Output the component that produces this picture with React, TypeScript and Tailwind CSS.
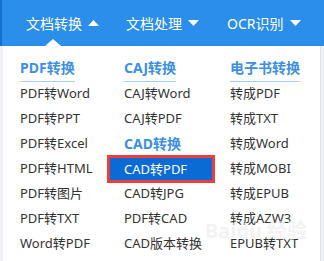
const font = { fontFamily: "'Noto Sans', 'Noto Sans CJK SC', sans-serif" };

const Caret = ({ up }: { up?: boolean }) => (
  <svg width="11" height="6" viewBox="0 0 11 6" className="shrink-0">
    {up ? <polygon points="0,6 5.5,0 11,6" fill="#fff" /> : <polygon points="0,0 11,0 5.5,6" fill="#fff" />}
  </svg>
);

const columns = [
  {
    title: "PDF转换",
    items: ["PDF转Word", "PDF转PPT", "PDF转Excel", "PDF转HTML", "PDF转图片", "PDF转TXT", "Word转PDF"],
  },
  {
    title: "CAJ转换",
    items: ["CAJ转Word", "CAJ转PDF", "#CAD转换", "!CAD转PDF", "CAD转JPG", "PDF转CAD", "CAD版本转换"],
  },
  {
    title: "电子书转换",
    items: ["转成PDF", "转成TXT", "转成Word", "转成MOBI", "转成EPUB", "转成AZW3", "EPUB转TXT"],
  },
];

const widths = ["w-[104px] pl-[17px]", "w-[108px] pl-[17px]", "flex-1 pl-[15px]"];

export default function App() {
  return (
    <div className="w-[324px] h-[261px] bg-[#eef1f5] overflow-hidden relative" style={font}>
      {/* top bar */}
      <div className="h-[46px] bg-[#2b8eea] border-l-[2px] border-[#1670d4] flex items-center pl-[24px] relative">
        <div className="w-[100px] flex items-center gap-[6px] text-white text-[14px]">
          <span>文档转换</span>
          <Caret up />
        </div>
        <div className="w-[101px] flex items-center gap-[6px] text-white text-[14px]">
          <span>文档处理</span>
          <Caret />
        </div>
        <div className="flex items-center gap-[6px] text-white text-[14px]">
          <span>OCR识别</span>
          <Caret />
        </div>
        <svg width="16" height="7" viewBox="0 0 16 7" className="absolute left-[43px] bottom-0">
          <polygon points="0,7 8,0 16,7" fill="#fff" />
        </svg>
      </div>

      {/* dropdown panel */}
      <div className="ml-[3px] w-[318px] h-[215px] bg-white border-r border-[#dde3ea] pt-[9px] flex">
        {columns.map((col, ci) => (
          <div key={col.title} className={widths[ci]}>
            <div className="h-[26px]">
              <span className="inline-block h-[26px] leading-[24px] border-b border-[#a9cdf3] text-[14px] font-bold text-[#3b8fe5]">
                {col.title}
              </span>
            </div>
            {col.items.map((it) => {
              if (it.startsWith("#"))
                return (
                  <div key={it} className="h-[25px] leading-[25px] text-[14px] font-bold text-[#3b8fe5]">
                    {it.slice(1)}
                  </div>
                );
              if (it.startsWith("!"))
                return (
                  <div
                    key={it}
                    className="-ml-[17px] -mt-[1px] -mb-[2px] h-[28px] border-[3px] border-[#ef3d3d] bg-[#0b6bd4] pl-[14px] text-[13px] leading-[22px] text-white"
                  >
                    {it.slice(1)}
                  </div>
                );
              return (
                <div key={it} className="h-[25px] leading-[25px] text-[13px] text-[#333]">
                  {it}
                </div>
              );
            })}
          </div>
        ))}
      </div>

      {/* watermark */}
      <div className="absolute left-[205px] top-[216px] text-[20px] font-bold text-[#ececec] opacity-60 pointer-events-none">
        Baidu 经验
      </div>
    </div>
  );
}
